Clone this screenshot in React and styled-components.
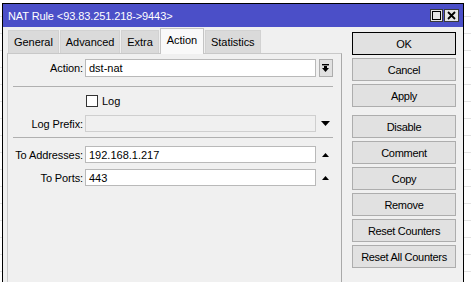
import React from 'react'
import styled, { createGlobalStyle, css } from 'styled-components'

const GlobalStyle = createGlobalStyle`
  html, body {
    margin: 0;
    padding: 0;
    height: 282px;
    overflow: hidden;
  }
  body {
    background: #fff repeating-linear-gradient(to bottom, transparent 0 16px, #e4e4e4 16px 17px);
    font-family: "Liberation Sans", Arial, sans-serif;
    font-size: 11px;
    color: #000;
  }
`

const Window = styled.div`
  box-sizing: border-box;
  margin: 3px 0 0 2px;
  width: 462px;
  height: 279px;
  border: 1px solid #000;
  border-bottom: none;
  background: #f0f0f0;
  display: flex;
  flex-direction: column;
  overflow: hidden;
`

const TitleBar = styled.div`
  height: 23px;
  flex: none;
  display: flex;
  align-items: center;
  padding: 0 4px 0 5px;
  background: #4b4fc8;
  color: #fff;
  font-size: 11px;
  letter-spacing: -0.1px;
`

const TitleText = styled.span`
  flex: 1;
`

const TitleControls = styled.div`
  display: flex;
  gap: 1px;
`

const TitleButton = styled.div`
  box-sizing: border-box;
  width: ${({ $w }) => $w || 13}px;
  height: 13px;
  border: 1px solid #3a3a3a;
  background: #e6e6e6;
  display: flex;
  align-items: center;
  justify-content: center;
`

const Body = styled.div`
  flex: 1;
  display: flex;
  padding-left: 4px;
`

const LeftPane = styled.div`
  width: 335px;
  display: flex;
  flex-direction: column;
`

const TabRow = styled.div`
  height: 26px;
  flex: none;
  display: flex;
  align-items: flex-end;
  padding-left: 1px;
  gap: 1px;
`

const Tab = styled.div`
  box-sizing: border-box;
  height: 23px;
  padding: 0 5px;
  display: flex;
  align-items: center;
  background: #dadada;
  border: 1px solid #d2d2d2;
  border-bottom: none;
  letter-spacing: -0.05px;
  ${({ $active }) =>
    $active &&
    css`
      height: 26px;
      margin-bottom: -1px;
      padding: 0 6px 3px;
      background: #f9f9f9;
      border-color: #c4c4c4;
      position: relative;
    `}
`

const Panel = styled.div`
  flex: 1;
  border: 1px solid #c8c8c8;
  border-bottom: none;
  border-right-color: #a9a9a9;
  padding-top: 5px;
  display: flex;
  flex-direction: column;
`

const FieldRow = styled.div`
  display: grid;
  grid-template-columns: 75px 231px 15px;
  column-gap: 2px;
  align-items: center;
  height: ${({ $h }) => $h || 17}px;
  margin-top: ${({ $mt }) => $mt || 0}px;
`

const Label = styled.span`
  text-align: right;
  letter-spacing: -0.1px;
`

const Input = styled.div`
  box-sizing: border-box;
  height: 100%;
  display: flex;
  align-items: center;
  padding-left: 3px;
  background: ${({ $disabled }) => ($disabled ? '#f0f0f0' : '#fff')};
  border: 1px solid ${({ $disabled }) => ($disabled ? '#cfcfcf' : '#b9b9b9')};
`

const IconCell = styled.div`
  display: flex;
  justify-content: center;
  align-items: center;
`

const DropButton = styled.div`
  box-sizing: border-box;
  width: 14px;
  height: 18px;
  border: 1px solid #adadad;
  background: #e1e1e1;
  display: flex;
  align-items: center;
  justify-content: center;
`

const Separator = styled.div`
  height: 1px;
  width: 320px;
  margin: ${({ $mt }) => $mt}px 0 0 5px;
  background: #b0b0b0;
`

const CheckBox = styled.div`
  box-sizing: border-box;
  width: 12px;
  height: 12px;
  border: 1px solid #333;
  background: #fff;
`

const CheckLabel = styled.label`
  grid-column: 2;
  display: flex;
  align-items: center;
  gap: 4px;
  padding-left: 1px;
`

const ButtonColumn = styled.div`
  width: 104px;
  margin-left: 10px;
  padding-top: 5px;
  display: flex;
  flex-direction: column;
  gap: 3px;
`

const Button = styled.button`
  box-sizing: border-box;
  height: 23px;
  margin: 0;
  padding: 0;
  border: 1px solid #adadad;
  background: #e1e1e1;
  font-family: inherit;
  font-size: 11px;
  letter-spacing: -0.3px;
  color: #000;
  ${({ $default }) =>
    $default &&
    css`
      border-color: #000;
    `}
  ${({ $gapBefore }) =>
    $gapBefore &&
    css`
      margin-top: 5px;
    `}
`

const MaxIcon = () => (
  <svg width="9" height="9" viewBox="0 0 9 9">
    <rect x="0.5" y="0.5" width="8" height="8" fill="none" stroke="#000" />
  </svg>
)

const CloseIcon = () => (
  <svg width="9" height="9" viewBox="0 0 9 9">
    <path d="M1 1 L8 8 M8 1 L1 8" stroke="#000" strokeWidth="1.8" />
  </svg>
)

const DropIcon = () => (
  <svg width="7" height="8" viewBox="0 0 7 8">
    <rect x="0" y="0" width="7" height="1.4" fill="#000" />
    <rect x="2" y="2" width="3" height="2" fill="#000" />
    <path d="M0 4 H7 L3.5 8 Z" fill="#000" />
  </svg>
)

const TriDown = () => (
  <svg width="9" height="5" viewBox="0 0 9 5">
    <path d="M0 0 H9 L4.5 5 Z" fill="#000" />
  </svg>
)

const TriUp = () => (
  <svg width="7" height="4" viewBox="0 0 7 4">
    <path d="M0 4 H7 L3.5 0 Z" fill="#000" />
  </svg>
)

const tabs = ['General', 'Advanced', 'Extra', 'Action', 'Statistics']
const buttons = ['OK', 'Cancel', 'Apply', 'Disable', 'Comment', 'Copy', 'Remove', 'Reset Counters', 'Reset All Counters']

export default function App() {
  return (
    <>
      <GlobalStyle />
      <Window>
        <TitleBar>
          <TitleText>NAT Rule &lt;93.83.251.218-&gt;9443&gt;</TitleText>
          <TitleControls>
            <TitleButton>
              <MaxIcon />
            </TitleButton>
            <TitleButton $w={15}>
              <CloseIcon />
            </TitleButton>
          </TitleControls>
        </TitleBar>
        <Body>
          <LeftPane>
            <TabRow>
              {tabs.map((t) => (
                <Tab key={t} $active={t === 'Action'}>
                  {t}
                </Tab>
              ))}
            </TabRow>
            <Panel>
              <FieldRow $h={18}>
                <Label>Action:</Label>
                <Input>dst-nat</Input>
                <IconCell>
                  <DropButton>
                    <DropIcon />
                  </DropButton>
                </IconCell>
              </FieldRow>
              <Separator $mt={9} />
              <FieldRow $h={12} $mt={8}>
                <CheckLabel>
                  <CheckBox />
                  Log
                </CheckLabel>
              </FieldRow>
              <FieldRow $mt={8}>
                <Label>Log Prefix:</Label>
                <Input $disabled />
                <IconCell>
                  <TriDown />
                </IconCell>
              </FieldRow>
              <Separator $mt={5} />
              <FieldRow $mt={8}>
                <Label>To Addresses:</Label>
                <Input>192.168.1.217</Input>
                <IconCell>
                  <TriUp />
                </IconCell>
              </FieldRow>
              <FieldRow $mt={6}>
                <Label>To Ports:</Label>
                <Input>443</Input>
                <IconCell>
                  <TriUp />
                </IconCell>
              </FieldRow>
            </Panel>
          </LeftPane>
          <ButtonColumn>
            {buttons.map((b) => (
              <Button key={b} $default={b === 'OK'} $gapBefore={b === 'Disable'}>
                {b}
              </Button>
            ))}
          </ButtonColumn>
        </Body>
      </Window>
    </>
  )
}
